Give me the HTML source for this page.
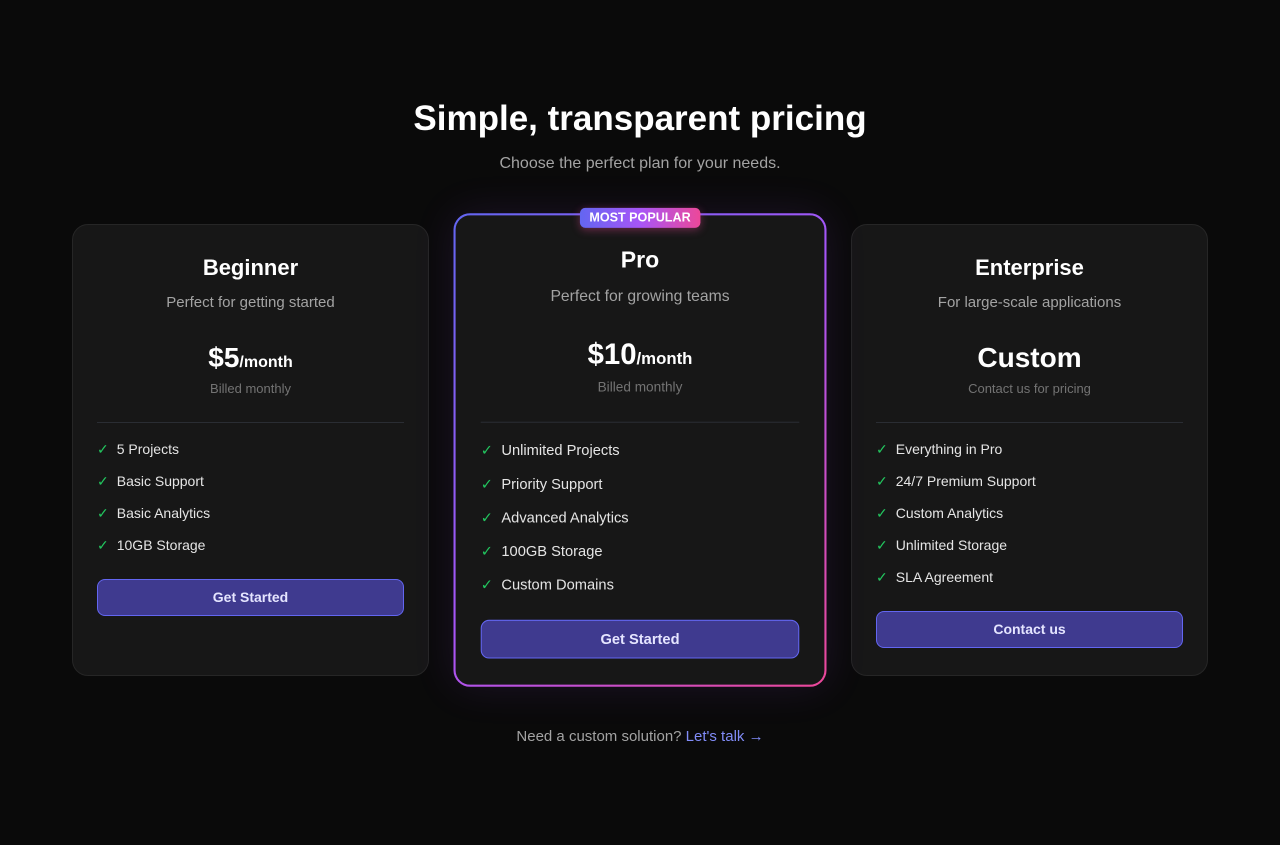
<!DOCTYPE html>
<html><head><meta charset="utf-8"><style>
*{box-sizing:border-box;margin:0;padding:0}
body{width:1280px;height:845px;background:#0a0a0a;font-family:"Liberation Sans",sans-serif;color:#fff;position:relative;overflow:hidden}
h1{position:absolute;top:97px;left:0;width:1280px;text-align:center;font-size:35px;font-weight:bold;line-height:44px}
.sub{position:absolute;top:154px;left:0;width:1280px;text-align:center;font-size:16px;color:#a3a3a3;line-height:20px}
.grid{position:absolute;top:224px;left:72px;width:1136px;display:flex;align-items:stretch}
.card{width:357px;height:452px;background:#171717;border:1px solid #262626;border-radius:16px;padding:24px 24px 29px;text-align:center;position:relative}
.t{font-size:22px;font-weight:bold;line-height:38px}
.d{font-size:15px;color:#a3a3a3;line-height:24px;margin-top:4px}
.p{font-size:28px;font-weight:bold;line-height:36px;margin-top:25px}
.p small{font-size:16px;line-height:0}
.b{font-size:13px;color:#737373;line-height:20px;margin-top:3px}
hr{border:none;border-top:1px solid #2a2d33;margin-top:23px}
ul{list-style:none;text-align:left;margin-top:10px}
li{font-size:14px;line-height:32px;color:#e5e5e5}
li span{color:#22c55e;margin-right:8px}
.btn{margin-top:18px;height:37px;border:1px solid #6366f1;background:#3f3a8f;border-radius:8px;font-size:14px;font-weight:bold;line-height:35px;color:#e5e5ff}
.pro{border:2px solid transparent;background:linear-gradient(#171717,#171717) padding-box,linear-gradient(135deg,#6366f1,#a855f7 50%,#ec4899) border-box;box-shadow:0 0 40px rgba(168,85,247,.12)}
.badge{position:absolute;top:-7px;left:50%;transform:translateX(-50%);background:linear-gradient(90deg,#6366f1,#a855f7 50%,#ec4899);font-size:12px;font-weight:bold;padding:0 9px;line-height:19px;border-radius:5px;white-space:nowrap;box-shadow:0 2px 8px rgba(236,72,153,.4)}
.foot{position:absolute;top:727px;left:0;width:1280px;text-align:center;font-size:15px;color:#a3a3a3;line-height:20px}
.foot a{color:#818cf8;text-decoration:none}
</style></head><body>
<h1>Simple, transparent pricing</h1>
<div class="sub">Choose the perfect plan for your needs.</div>
<div class="grid">
<div class="card"><div class="t">Beginner</div><div class="d">Perfect for getting started</div><div class="p">$5<small>/month</small></div><div class="b">Billed monthly</div><hr><ul><li><span>✓</span>5 Projects</li><li><span>✓</span>Basic Support</li><li><span>✓</span>Basic Analytics</li><li><span>✓</span>10GB Storage</li></ul><div class="btn">Get Started</div></div>
<div style="width:422px"></div>
<div class="card"><div class="t">Enterprise</div><div class="d">For large-scale applications</div><div class="p">Custom</div><div class="b">Contact us for pricing</div><hr><ul><li><span>✓</span>Everything in Pro</li><li><span>✓</span>24/7 Premium Support</li><li><span>✓</span>Custom Analytics</li><li><span>✓</span>Unlimited Storage</li><li><span>✓</span>SLA Agreement</li></ul><div class="btn">Contact us</div></div>
<div class="card pro" style="position:absolute;left:390px;top:0;height:452px;width:356px;transform:scale(1.048);padding-top:24px"><div class="badge">MOST POPULAR</div><div class="t">Pro</div><div class="d">Perfect for growing teams</div><div class="p">$10<small>/month</small></div><div class="b">Billed monthly</div><hr><ul><li><span>✓</span>Unlimited Projects</li><li><span>✓</span>Priority Support</li><li><span>✓</span>Advanced Analytics</li><li><span>✓</span>100GB Storage</li><li><span>✓</span>Custom Domains</li></ul><div class="btn">Get Started</div></div>
</div>
<div class="foot">Need a custom solution? <a>Let's talk →</a></div>
</body></html>
